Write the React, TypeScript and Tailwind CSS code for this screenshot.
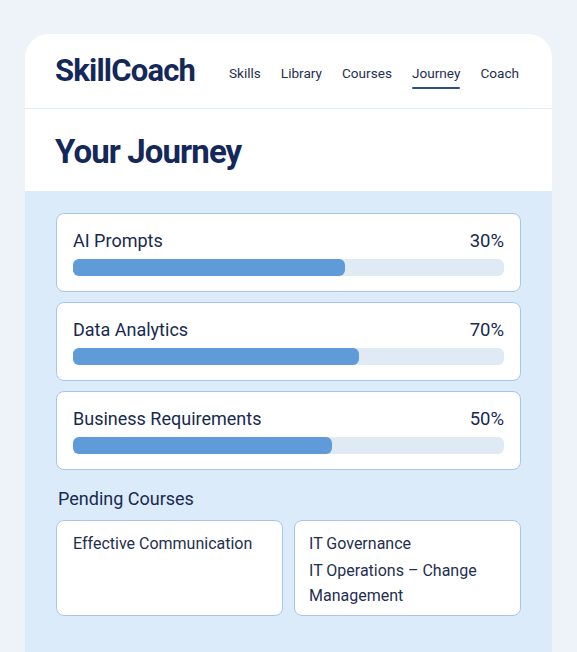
import React from 'react'

const skills = [
  { name: 'AI Prompts', pct: '30%', fill: 63 },
  { name: 'Data Analytics', pct: '70%', fill: 66.4 },
  { name: 'Business Requirements', pct: '50%', fill: 60 },
]

const nav = ['Skills', 'Library', 'Courses', 'Journey', 'Coach']

export default function App() {
  return (
    <div
      className="h-[652px] overflow-hidden bg-[#eef3f9] pt-[34px] pl-[25px] pr-[25px]"
      style={{ fontFamily: 'Roboto, "Noto Sans", sans-serif' }}
    >
      <div className="h-[640px] overflow-hidden rounded-t-[24px] bg-white text-[#172a4f]">
        <header className="flex h-[75px] items-center border-b border-[#e3edf8] pl-[30px] pr-[33px]">
          <div className="text-[31px] font-bold tracking-[-0.8px] text-[#14295a]">SkillCoach</div>
          <nav className="ml-auto mt-[5px] flex gap-[20px] text-[13.6px] text-[#1f2f4f]">
            {nav.map((n) => (
              <div key={n} className="relative">
                {n}
                {n === 'Journey' && (
                  <div className="absolute left-0 right-0 top-[24px] h-[2px] rounded bg-[#2b4f8c]" />
                )}
              </div>
            ))}
          </nav>
        </header>
        <div className="flex h-[82px] items-center pl-[30px] pt-[3px]">
          <h1 className="text-[33px] font-bold tracking-[-0.9px] text-[#14295a]">Your Journey</h1>
        </div>
        <div className="h-full bg-[#dcebfa] px-[31px] pt-[22px]">
          <div className="flex flex-col gap-[10px]">
            {skills.map((s) => (
              <div key={s.name} className="h-[79px] rounded-[8px] border border-[#a9c6ea] bg-white px-[16px] pt-[16px]">
                <div className="flex justify-between text-[18px] leading-[22px] text-[#172a4f]">
                  <span>{s.name}</span>
                  <span className="text-[18.5px]">{s.pct}</span>
                </div>
                <div className="mt-[7px] h-[17px] rounded-[6px] bg-[#e0eaf5]">
                  <div className="h-full rounded-[6px] bg-[#5f9bd8]" style={{ width: `${s.fill}%` }} />
                </div>
              </div>
            ))}
          </div>
          <h2 className="mt-[18px] pl-[2px] text-[18px] leading-[22px] text-[#172a4f]">Pending Courses</h2>
          <div className="mt-[10px] grid grid-cols-2 gap-[11px]">
            <div className="h-[96px] rounded-[8px] border border-[#a9c6ea] bg-white px-[16px] pt-[10px] text-[16px] leading-[25px] text-[#1f2f4f]">
              Effective Communication
            </div>
            <div className="h-[96px] rounded-[8px] border border-[#a9c6ea] bg-white px-[14px] pt-[10px] text-[16px] leading-[25px] text-[#1f2f4f]">
              <div>IT Governance</div>
              <div className="mt-[2px]">IT Operations – Change Management</div>
            </div>
          </div>
        </div>
      </div>
    </div>
  )
}
